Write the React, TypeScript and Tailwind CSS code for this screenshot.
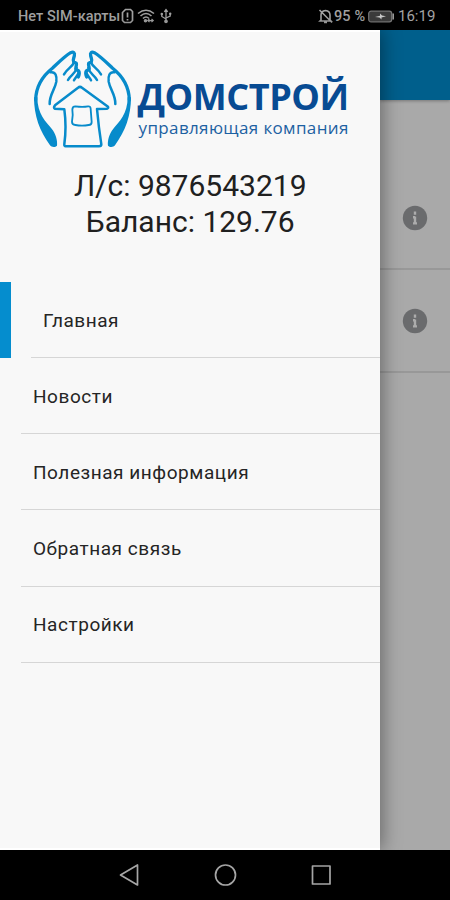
import React from "react";

const menu = ["Новости", "Полезная информация", "Обратная связь", "Настройки"];

function Hand() {
  return (
    <g>
      <path
        d="M32 180 C33 133 55 106 83 84 C101 67 120 48 137 38 C146 34 150 39 148 47 C147 54 142 60 146 66 L154 70 C156 77 150 84 153 88 L161 93 C165 99 162 106 160 111"
        fill="none"
        strokeWidth="10"
      />
      <path d="M148 66 C141 82 128 84 117 103 M155 84 C150 103 138 103 129 120 M161 98 C159 106 151 112 147 121" fill="none" strokeWidth="7.5" />
      <path d="M76 97 C92 94 96 108 94 125 C90 149 73 164 74 192" fill="none" strokeWidth="7.5" />
      <path d="M27 172 C27 228 44 273 75 316 C80 322 91 322 96 317 C98 303 93 282 80 266 C63 247 37 222 37 172 Z" stroke="none" fill="#078bcb" />
    </g>
  );
}

function Emblem() {
  return (
    <svg viewBox="0 0 360 345" className="h-[115px] w-[120px] shrink-0" stroke="#078bcb" strokeLinecap="round" strokeLinejoin="round">
      <Hand />
      <g transform="translate(345 0) scale(-1 1)">
        <Hand />
      </g>
      <path d="M118 208 L89 206 Q85 202 90 196 L159 143 Q165 138 171 143 L249 200 Q251 205 246 206 L216 207 Q221 262 229 313 Q229 319 222 319 L122 319 Q117 319 118 312 Q125 260 118 208 Z" fill="none" strokeWidth="7.5" />
      <path d="M151 199 Q173 202 189 199 Q197 198 197 207 L200 246 Q200 255 191 255 Q171 259 151 255 Q141 254 141 245 Q145 225 142 209 Q142 199 151 199 Z" fill="none" strokeWidth="5.5" />
    </svg>
  );
}

function StatusBar() {
  return (
    <header className="flex h-[30px] shrink-0 items-center bg-black pl-[18px] pr-[14px] pt-[2px] text-[#a3a3a3]">
      <span className="w-[103px] whitespace-nowrap pt-[2px] text-[14.5px] font-medium leading-[28px] tracking-[0.05px]">Нет SIM-карты</span>
      <svg className="h-[16px] w-[13px]" viewBox="0 0 13 16" fill="none" stroke="currentColor" strokeWidth="1.7">
        <path d="M4.5 1.5h5l2 2v9l-2 2h-6l-2-2v-8zM6.5 4.5v5M6.5 11v1.5" />
      </svg>
      <svg className="ml-[3px] h-[16px] w-[18px]" viewBox="0 0 18 16" fill="none" stroke="currentColor" strokeWidth="1.6">
        <path d="M1 5.5Q9-1 17 5.5M3.5 8Q9 3 14.5 8M6 10.5Q9 7.5 12 10.5" />
        <path d="M11 12.6h5M12.5 11l-1.8 1.6 1.8 1.6M14.5 11l1.8 1.6-1.8 1.6" strokeWidth="1.1" />
        <circle cx="8.5" cy="12.7" r="1" fill="currentColor" />
      </svg>
      <svg className="ml-[5px] h-[16px] w-[12px]" viewBox="0 0 12 16" fill="none" stroke="currentColor" strokeWidth="1.3">
        <path d="M6 14V2M4.3 3.8L6 1.5l1.7 2.3M1.8 6v2.5L6 11M10.2 5.5V8L6 10" />
        <circle cx="6" cy="13.3" r="1.2" fill="currentColor" />
        <circle cx="1.8" cy="6" r=".6" />
        <circle cx="10.2" cy="5.8" r=".6" />
      </svg>
      <svg className="ml-auto h-[16px] w-[15px]" viewBox="0 0 15 16" fill="none" stroke="currentColor" strokeWidth="1.6">
        <path d="M3 12V7Q3 3 7.5 2.5Q12 3 12 7v5l1 1H2zM6 14.5h3M1.5 2L14 14.5" />
      </svg>
      <span className="ml-px w-[34px] whitespace-nowrap pt-[2px] text-[14.5px] font-medium leading-[28px] tracking-[0.1px]">95 %</span>
      <svg className="h-[13px] w-[27px]" viewBox="0 0 27 12">
        <rect x=".7" y=".7" width="23" height="10.6" rx="2.4" fill="#3c3c3c" stroke="#777" strokeWidth="1.2" />
        <path d="M25.2 3v6" stroke="#999" strokeWidth="1.6" />
        <path d="M7 6.5l5-1.2V3l2 2 4 .7-4.5 1.2V9l-2-2z" fill="#ccc" />
      </svg>
      <span className="ml-[3px] w-[38px] whitespace-nowrap text-[15px] leading-[28px]">16:19</span>
    </header>
  );
}

function InfoRow({ first }: { first?: boolean }) {
  return (
    <div className={`flex items-center justify-center border-b-2 border-[#989898] pt-px ${first ? "h-[104px]" : "h-[103px]"}`}>
      <svg className="h-[26px] w-[26px]" viewBox="0 0 26 26">
        <circle cx="13" cy="13" r="12.2" fill="#6a6b6d" />
        <path d="M13 6.5v3.2M13 11.5v7.5M11 12.2h2M11 18.4h4" stroke="#acacac" strokeWidth="2.4" />
      </svg>
    </div>
  );
}

export default function App() {
  return (
    <div className="flex h-[900px] w-[450px] flex-col overflow-hidden bg-black font-['Roboto','Noto_Sans',sans-serif]">
      <StatusBar />
      <main className="flex h-[820px] shrink-0">
        <aside className="z-10 flex w-[380.4px] shrink-0 flex-col border-y-2 border-white bg-[#f8f8f8] shadow-[2px_0_18px_rgba(0,0,0,0.4)]">
          <div className="flex h-[124px] shrink-0 pl-[25px] pt-[8px]">
            <Emblem />
            <div className="-ml-[7.5px] flex flex-col whitespace-nowrap pt-[45px] font-['Open_Sans','Noto_Sans',sans-serif]">
              <span className="h-[34px] text-[36px] font-bold leading-[24px] tracking-[-0.45px] text-[#084b93]">ДОМСТРОЙ</span>
              <span className="pl-px text-[17px] leading-[17px] tracking-[0.37px] text-[#1c61a2]">управляющая компания</span>
            </div>
          </div>
          <div className="mt-[12px] flex h-[114px] shrink-0 flex-col items-center text-[30px] leading-[36px] text-[#202020]">
            <span className="whitespace-nowrap">Л/с: 9876543219</span>
            <span className="whitespace-nowrap">Баланс: 129.76</span>
          </div>
          <nav className="flex flex-col text-[19px] tracking-[0.55px] text-[#252525]">
            <div className="flex h-[76px]">
              <div className="w-[11px] bg-[#058dce]" />
              <div className="ml-[20px] flex flex-1 items-center border-b border-[#d6d6d6] pl-[12px] pt-[4px]">Главная</div>
            </div>
            {menu.map((label) => (
              <div key={label} className="ml-[21px] flex h-[76.2px] items-center border-b border-[#d6d6d6] pl-[12px] pt-[3px]">
                {label}
              </div>
            ))}
          </nav>
        </aside>
        <section className="flex flex-1 flex-col bg-[#a9a9a9]">
          <div className="h-[70px] bg-[#005f8c] shadow-[0_1px_3px_rgba(0,0,0,0.3)]" />
          <div className="mt-[66px]">
            <InfoRow first />
            <InfoRow />
          </div>
        </section>
      </main>
      <footer className="flex h-[50px] shrink-0 items-center justify-center bg-black">
        <svg className="h-[30px] w-[220px]" viewBox="0 0 220 30" fill="none" stroke="#a6a6a6" strokeWidth="1.7" strokeLinejoin="round">
          <path d="M22.5 5v20L5.5 15z" />
          <circle cx="110.5" cy="15" r="10" />
          <rect x="197.5" y="6" width="17.5" height="18" />
        </svg>
      </footer>
    </div>
  );
}
